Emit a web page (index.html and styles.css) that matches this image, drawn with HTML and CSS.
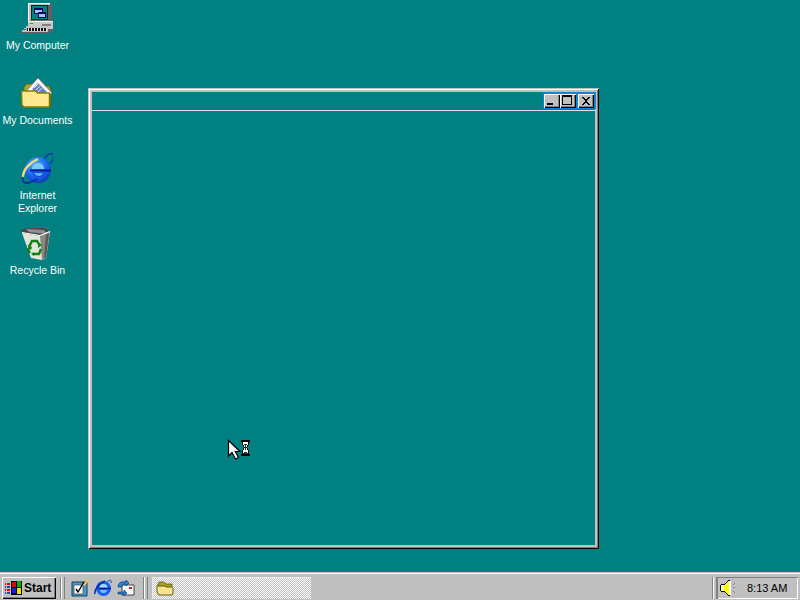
FILE: index.html
```html
<!DOCTYPE html>
<html lang="en">
<head>
<meta charset="utf-8">
<title>Windows 98 desktop</title>
<link rel="stylesheet" href="styles.css">
</head>
<body>
<main class="desktop">
  <div class="icon icon-computer">
    <svg class="icon-art" width="32" height="32" viewBox="0 0 32 32" shape-rendering="crispEdges">
      <path d="M7 1h23v21H7z" fill="#c0c0c0"/>
      <path d="M7 1h22v1H8v20H7z" fill="#fff"/>
      <path d="M29 1h2v22h-2zM27 3h2v17h-2z" fill="#606060"/>
      <path d="M10 3h17v15H10z" fill="#202020"/>
      <path d="M11 4h15v13H11z" fill="#008080"/>
      <path d="M13 6h9v6h-9z" fill="#000060"/><path d="M14 8h7v3h-7z" fill="#a8c8e8"/>
      <path d="M17 10h8v6h-8z" fill="#000060"/><path d="M18 12h6v3h-6z" fill="#a8c8e8"/>
      <path d="M7 19h25v8H7z" fill="#c8c8c8"/><path d="M9 21h3v1H9z" fill="#00c000"/><path d="M21 22h9v2h-9z" fill="#808080"/>
      <path d="M7 19h25v1H7z" fill="#f0f0f0"/><path d="M9 18h20v1H9z" fill="#707070"/>
      <path d="M5 24h3v1H5zM3 26h4v1H3zM1 28h4v2H1z" fill="#c0c0c0"/>
      <path d="M5 25h22v5H5z" fill="#c0c0c0"/>
      <path d="M6 26h20v3H6z" fill="#101010"/>
      <path d="M7 26h1v3H7zM10 26h1v3h-1zM13 26h1v3h-1zM16 26h1v3h-1zM19 26h1v3h-1zM22 26h1v3h-1zM25 26h1v3h-1z" fill="#e0e0e0"/>
      <path d="M0 30h30v1H0zM27 27h5v3h-5z" fill="#606060"/>
    </svg>
    <span class="icon-label">My Computer</span>
  </div>
  <div class="icon icon-documents">
    <svg class="icon-art" width="32" height="32" viewBox="0 0 32 32">
      <path d="M3 10l3-3 5 0 2 2h15l2 4v16H3z" fill="#b0a820" stroke="#606000" stroke-width=".8"/>
      <path d="M6 13L17 1l14 15-6 10H9z" fill="#fff" stroke="#707070" stroke-width=".8"/>
      <path d="M11 12l6-6 9 9-3 4zM9 16l4-4 8 8-2 3z" fill="#6c80c8"/>
      <path d="M13 11l4-4M15 13l4-4M17 15l4-4" stroke="#fff" stroke-width=".8"/>
      <path d="M.5 14h14l2 2h11.500l.5 1v12l-1 1H3l-2-2z" fill="#ffe890" stroke="#808000" stroke-width="1.400"/>
      <path d="M29 16v13.500" stroke="#707000" stroke-width="1.600"/>
    </svg>
    <span class="icon-label">My Documents</span>
  </div>
  <div class="icon icon-explorer">
    <svg class="icon-art" width="32" height="32" viewBox="0 0 32 32">
      <defs>
        <radialGradient id="ie" cx=".4" cy=".3" r=".8"><stop offset="0" stop-color="#40b0ff"/><stop offset=".6" stop-color="#1860f0"/><stop offset="1" stop-color="#0830a0"/></radialGradient>
      </defs>
      <path d="M23 7c3-5 8-7 9-4 1 2-1 7-3 9" fill="none" stroke="#0840b0" stroke-width="1.500"/>
      <circle cx="17" cy="18" r="13" fill="url(#ie)"/>
      <path d="M11 17c0-4 3-6 6-6 4 0 6 2 6 6z" fill="#80c8ff"/>
      <path d="M9 18.500h21" stroke="#001890" stroke-width="2"/>
      <path d="M11 20c1 4 4 6 7 5 3 0 5-2 6-5z" fill="#1450e0"/>
      <path d="M13 21c1 2 3 3 5 3 2 0 3-1 4-3z" fill="#60b0ff"/>
      <path d="M2 25c0-7 6-14 15-18" fill="none" stroke="#f0d878" stroke-width="2.400"/>
      <path d="M2 25c-1 3 0 6 3 6 4 0 8-2 11-4" fill="none" stroke="#0830a0" stroke-width="1.800"/>
    </svg>
    <span class="icon-label">Internet Explorer</span>
  </div>
  <div class="icon icon-recycle">
    <svg class="icon-art" width="32" height="33" viewBox="0 0 32 33">
      <path d="M0 3l6-2 17 0 6 4-1 3H2z" fill="#484848"/>
      <path d="M5 2l18 1 3 4-18-2z" fill="#909090"/>
      <path d="M1 6l18 3 10-4-4 26-4 2-11-2z" fill="#e4e4dc"/>
      <path d="M19 9l10-4-4 26-4 2z" fill="#888880"/>
      <path d="M25 8l3-2-3 24-2 1z" fill="#585858"/>
      <path d="M1 5.500l18 3 10-4" fill="none" stroke="#fff" stroke-width="1.200"/>
      <path d="M8 20l3-6h5l3 5M20 22l-2 5h-6M9 26l-2-3 2-3" fill="none" stroke="#108010" stroke-width="2.400"/>
      <path d="M6 18l5 2-1 3zM17 16l4 2-4 3zM13 25l-3 2 3 2z" fill="#108010"/>
    </svg>
    <span class="icon-label">Recycle Bin</span>
  </div>

  <section class="window">
    <div class="titlebar">
      <div class="controls">
        <button class="win-btn" aria-label="Minimize"><svg width="16" height="14" viewBox="0 0 16 14" shape-rendering="crispEdges"><path d="M3 9h6v2H3z"/></svg></button>
        <button class="win-btn" aria-label="Maximize"><svg width="16" height="14" viewBox="0 0 16 14" shape-rendering="crispEdges"><path d="M2 1h10v10H2zM3 3v7h8V3z" fill-rule="evenodd"/></svg></button>
        <button class="win-btn win-close" aria-label="Close"><svg width="16" height="14" viewBox="0 0 16 14" shape-rendering="crispEdges"><path d="M4 3h2v1h1v1h2V4h1V3h2v1h-1v1h-1v1H9v2h1v1h1v1h1v1h-2v-1H9V9H7v1H6v1H4v-1h1V9h1V8h1V6H6V5H5V4H4z"/></svg></button>
      </div>
    </div>
  </section>

  <div class="cursor">
    <svg width="24" height="22" viewBox="0 0 24 22">
      <path d="M1.500 2.500v15.500l3.500-3.500 3.500 6.500 3-1.500-3.200-6H13z" fill="#fff" stroke="#000" stroke-width="1.200"/>
      <g shape-rendering="crispEdges">
        <path d="M14 2h9v2h-9zM14 16h9v2h-9zM15 4h1v3h-1zM21 4h1v3h-1zM16 7h1v2h-1zM20 7h1v2h-1zM17 9h3v1h-3zM16 10h1v2h-1zM20 10h1v2h-1zM15 12h1v4h-1zM21 12h1v4h-1z" fill="#000"/>
        <path d="M16 4h5v3h-5zM17 7h3v2h-3zM17 10h3v2h-3zM16 12h5v4h-5z" fill="#fff"/>
        <path d="M17 6h3v1h-3zM18 7h1v5h-1zM17 14h3v1h-3zM16 15h5v1h-5z" fill="#303030"/>
      </g>
    </svg>
  </div>
</main>

<footer class="taskbar">
  <button class="start">
    <svg width="18" height="16" viewBox="0 0 18 16" shape-rendering="crispEdges">
      <path d="M0 3h1v2H0zM2 3h3v2H2zM0 9h1v2H0zM2 9h3v2H2z" fill="#e00000"/>
      <path d="M0 6h1v2H0zM2 6h3v2H2zM0 12h1v2H0zM2 12h3v2H2z" fill="#2040e0"/>
      <path d="M6 1h11v14H6z" fill="#000"/>
      <path d="M7 2h4v5H7z" fill="#e00000"/><path d="M12 1h4v6h-4z" fill="#00b000"/>
      <path d="M7 8h4v5H7z" fill="#1020e0"/><path d="M12 8h4v6h-4z" fill="#f8e000"/>
    </svg>
    <span>Start</span>
  </button>
  <span class="divider divider-start"></span>
  <div class="quick">
    <svg width="18" height="18" viewBox="0 0 18 18"><path d="M1 3h15v14H1z" fill="#4f98c8" stroke="#0a4060"/><path d="M3 6h9v9H3z" fill="#fff" stroke="#404040" stroke-width=".7"/><path d="M5 10l2 3 6-10" fill="none" stroke="#000" stroke-width="1.400"/><path d="M12 6l4-6 2 1-4 6z" fill="#f0c040"/></svg>
    <svg width="18" height="18" viewBox="0 0 18 18"><circle cx="9.500" cy="9.500" r="7.500" fill="#1860f0"/><path d="M5.500 8.500a4 3.500 0 0 1 8 0z" fill="#a8d8ff"/><path d="M4 9.500h13" stroke="#001890" stroke-width="1.200"/><path d="M6 11a3.500 3 0 0 0 7 0z" fill="#70c0ff"/><path d="M1 15C0 11 5 4 11 2" fill="none" stroke="#0830a0" stroke-width="1.500"/><path d="M13 3c2-2 5-3 4 1" fill="none" stroke="#0840b0"/></svg>
    <svg width="18" height="18" viewBox="0 0 18 18"><path d="M5 6h12v10H5z" fill="#f8f8f8" stroke="#202020" stroke-width=".8"/><path d="M12 8h3v2h-3z" fill="#d02020"/><path d="M1 8c0-4 3-6 8-5V1l3 3-3 3V5C6 5 5 6 5 8z" fill="#2880e0" stroke="#003060" stroke-width=".6"/><path d="M1 13h6v-2l3 3-3 3v-2H1z" fill="#2880e0" stroke="#003060" stroke-width=".6"/></svg>
  </div>
  <span class="divider divider-quick"></span>
  <button class="task">
    <svg width="18" height="16" viewBox="0 0 18 16"><path d="M2 4l1-2h5l2 2h6v10H2z" fill="#a8a020" stroke="#505000" stroke-width=".7"/><path d="M1 6h8l1 1h6l1 1v6l-1 1H3l-2-3z" fill="#f8e490" stroke="#505000" stroke-width=".9"/></svg>
  </button>
  <span class="divider divider-tray"></span>
  <div class="tray">
    <svg width="18" height="18" viewBox="0 0 18 18" shape-rendering="crispEdges"><path d="M1 6h3v6H1z" fill="#ffff80"/><path d="M1 5h4v1H1zM1 12h4v1H1zM0 6h1v6H0z" fill="#000"/><path d="M4 6h1v6h-1zM5 5h1v8H5zM6 4h1v10H6zM7 3h1v12H7zM8 2h1v14H8z" fill="#ffff00"/><path d="M5 4h1v1H5zM6 3h1v1H6zM7 2h1v1H7zM8 1h2v1H8zM5 13h1v1H5zM6 14h1v1H6zM7 15h1v1H7zM8 16h2v1H8z" fill="#000"/><path d="M9 2h2v14H9z" fill="#fff"/><path d="M13 8h2v1h-2zM13 5h1v1h-1zM14 4h1v1h-1zM13 12h1v1h-1zM14 13h1v1h-1z" fill="#808080"/></svg>
    <span class="clock">8:13 AM</span>
  </div>
</footer>
</body>
</html>
```
FILE: styles.css
```css
* { box-sizing: border-box; }
html, body { margin: 0; height: 100%; }
body {
  display: flex;
  flex-direction: column;
  overflow: hidden;
  background: #008080;
  font-family: "Liberation Sans", Arial, sans-serif;
  font-size: 10.5px;
}
.desktop { position: relative; flex: 1; }
.icon {
  position: absolute;
  left: 0;
  width: 75px;
  display: flex;
  flex-direction: column;
  align-items: center;
  color: #fff;
  text-align: center;
  line-height: 13px;
}
.icon-art { display: block; margin: 0 1px 5px 0; }
.icon-label { display: block; }
.icon-computer { top: 2px; }
.icon-documents { top: 77px; }
.icon-explorer { top: 152px; }
.icon-explorer .icon-label { width: 50px; }
.icon-recycle { top: 227px; }
.icon-recycle .icon-art { margin-bottom: 4px; }

.window {
  position: absolute;
  left: 88px;
  top: 88px;
  width: 511px;
  height: 461px;
  padding: 4px 3px 0 4px;
  box-shadow:
    inset 1px 1px 0 #c0c0c0,
    inset -1px -1px 0 #000,
    inset 2px 2px 0 #fff,
    inset -2px -2px 0 #808080,
    inset 4px 4px 0 #c0c0c0,
    inset -4px -4px 0 #c0c0c0;
}
.titlebar {
  height: 19px;
  display: flex;
  justify-content: flex-end;
  align-items: flex-start;
  border-bottom: 1px solid #d8e4e4;
}
.controls {
  display: flex;
  height: 17px;
  padding: 2px 2px 1px 1px;
  background: #1084d0;
}
.win-btn {
  width: 16px;
  height: 14px;
  padding: 0;
  display: block;
  background: #c0c0c0;
  border: 0;
  box-shadow: inset 1px 1px 0 #fff, inset -1px -1px 0 #000, inset -2px -2px 0 #808080;
}
.win-btn svg { display: block; }
.win-close { margin-left: 2px; }

.cursor { position: absolute; left: 227px; top: 438px; line-height: 0; }

.taskbar {
  height: 28px;
  flex: none;
  display: flex;
  align-items: center;
  padding: 2px 0 0 2px;
  background: #c0c0c0;
  border-top: 1px solid #c0c0c0;
  box-shadow: inset 0 1px 0 #fff;
}
.start {
  width: 54px;
  height: 22px;
  padding: 0 0 0 3px;
  display: flex;
  align-items: center;
  gap: 1px;
  background: #c0c0c0;
  border: 0;
  box-shadow: inset 1px 1px 0 #fff, inset -1px -1px 0 #000, inset -2px -2px 0 #808080;
  font: bold 12px "Liberation Sans", Arial, sans-serif;
  color: #000;
}
.start svg { flex: none; }
.divider {
  width: 5px;
  height: 22px;
  flex: none;
  background: #c0c0c0;
  box-shadow: inset 1px 0 0 #808080, inset 2px 0 0 #fff, inset -1px 0 0 #808080;
}
.divider-start { margin-left: 4px; }
.divider-quick { margin-left: 8px; }
.divider-tray { margin-left: auto; }
.quick { display: flex; align-items: center; gap: 5px; margin-left: 6px; }
.quick svg { display: block; }
.task {
  width: 159px;
  height: 22px;
  margin-left: 4px;
  padding: 0 0 0 4px;
  display: flex;
  align-items: center;
  border: 0;
  background-color: #c0c0c0;
  background-image: conic-gradient(#fff 25%, #c0c0c0 0 50%, #fff 0 75%, #c0c0c0 0);
  background-size: 2px 2px;
  box-shadow: inset 1px 1px 0 #e8e8e8;
}
.tray {
  width: 81px;
  height: 22px;
  margin-right: 2px;
  padding-left: 3px;
  display: flex;
  align-items: center;
  box-shadow: inset 1px 1px 0 #808080, inset -1px -1px 0 #fff;
}
.clock { margin-left: 9px; font-size: 11px; color: #000; }
```
